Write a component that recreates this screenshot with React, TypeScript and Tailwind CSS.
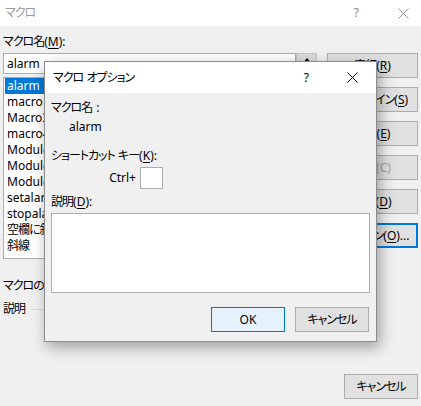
import React from "react";

const FONT = {
  fontFamily: '"Noto Sans", "Noto Sans CJK JP", sans-serif',
  fontFeatureSettings: '"palt"',
};

function U({ c }: { c: string }) {
  return <span className="underline underline-offset-[2px] decoration-[1px]">{c}</span>;
}

function J({ children }: { children: React.ReactNode }) {
  return <span className="tracking-[-1px]">{children}</span>;
}

function Btn({
  children,
  disabled,
  focused,
}: {
  children: React.ReactNode;
  disabled?: boolean;
  focused?: boolean;
}) {
  return (
    <div
      className={
        "h-[25px] flex items-center justify-center whitespace-pre bg-[#e1e1e1] leading-[16px] " +
        (focused ? "border-2 border-[#0078d7]" : "border border-[#adadad]") +
        (disabled ? " text-[#a0a0a0]" : " text-black")
      }
    >
      {children}
    </div>
  );
}

function XIcon({ color }: { color: string }) {
  return (
    <svg width="11" height="11" viewBox="0 0 11 11">
      <path d="M0.5 0.5 L10.5 10.5 M10.5 0.5 L0.5 10.5" stroke={color} strokeWidth="1" fill="none" />
    </svg>
  );
}

export default function App() {
  const items = [
    "alarm",
    "macro1",
    "Macro3",
    "macro4",
    "Module1.alarm",
    "Module1.macro1",
    "Module2.setalarm",
    "setalarm",
    "stopalarm",
    "空欄に斜線",
    "斜線",
  ];
  return (
    <div
      className="relative w-[421px] h-[406px] bg-[#f0f0f0] overflow-hidden text-[12px] text-black"
      style={FONT}
    >
      {/* outer title bar */}
      <div className="h-[26px] bg-white flex items-center pl-[5px]">
        <span className="text-[#9a9a9a] leading-[16px]">
          <J>マクロ</J>
        </span>
        <span className="ml-auto text-[#8a8a8a] leading-[16px] mr-[39px]">?</span>
        <span className="mr-[12px] flex items-center">
          <XIcon color="#9a9a9a" />
        </span>
      </div>

      {/* outer body */}
      <div className="flex px-[3px] gap-[10px]">
        <div className="w-[314px] flex flex-col">
          <div className="mt-[8px] h-[16px] leading-[16px]">
            <J>マクロ名</J>(<U c="M" />):
          </div>
          <div className="mt-[3px] h-[21px] flex">
            <div className="flex-1 bg-white border border-[#adadad] flex items-center pl-[3px] leading-[16px]">
              alarm
            </div>
            <div className="w-[21px] bg-[#dadada] border border-[#c4c4c4] flex justify-center pt-[4px]">
              <svg width="8" height="5" viewBox="0 0 8 5">
                <path d="M4 0 L8 5 L0 5 Z" fill="#000" />
              </svg>
            </div>
          </div>
          <div className="mt-[3px] h-[182px] bg-white border border-[#adadad] flex flex-col px-[1px]">
            {items.map((it, i) => (
              <div
                key={it}
                className={
                  "h-[16px] leading-[16px] pl-[2px] whitespace-nowrap " +
                  (i === 0 ? "bg-[#0078d7] text-white" : "")
                }
              >
                {/^[A-Za-z]/.test(it) ? it : <J>{it}</J>}
              </div>
            ))}
          </div>
          <div className="mt-[19px] h-[16px] leading-[16px] whitespace-nowrap">
            <J>マクロの保存先</J>(<U c="A" />):
          </div>
          <div className="mt-[7px] h-[16px] flex items-center">
            <span className="leading-[16px] whitespace-nowrap">
              <J>説明</J>
            </span>
            <div className="ml-[5px] flex-1 h-px bg-[#dcdcdc]" />
          </div>
        </div>
        <div className="w-[91px] flex flex-col gap-[9px] pt-[27px]">
          <Btn>
            <J>実行</J>(<U c="R" />)
          </Btn>
          <Btn>
            <J>ステップ</J> <J>イン</J>(<U c="S" />)
          </Btn>
          <Btn>
            <J>編集</J>(<U c="E" />)
          </Btn>
          <Btn disabled>
            <J>作成</J>(C)
          </Btn>
          <Btn>
            <J>削除</J>(<U c="D" />)
          </Btn>
          <Btn focused>
            <J>オプション</J>(<U c="O" />)...
          </Btn>
        </div>
      </div>
      <div className="flex justify-end pr-[3px] mt-[57px]">
        <div className="w-[74px]">
          <Btn>
            <J>キャンセル</J>
          </Btn>
        </div>
      </div>

      {/* modal dialog */}
      <div className="absolute left-[44px] top-[61px] w-[333px] h-[281px] border border-[#8c8c8c] bg-[#f0f0f0] shadow-[3px_5px_14px_rgba(0,0,0,0.35)] flex flex-col">
        <div className="h-[31px] bg-white flex items-center pl-[8px]">
          <span className="leading-[16px] whitespace-pre">
            <J>マクロ</J> <J>オプション</J>
          </span>
          <span className="ml-auto leading-[16px] mr-[38px]">?</span>
          <span className="mr-[18px] flex items-center">
            <XIcon color="#000" />
          </span>
        </div>
        <div className="flex flex-col px-[6px]">
          <div className="mt-[7px] h-[16px] leading-[16px] whitespace-pre">
            <J>マクロ名</J> <span className="ml-[1px]">:</span>
          </div>
          <div className="mt-[3px] h-[16px] leading-[16px] pl-[18px]">alarm</div>
          <div className="mt-[13px] h-[16px] leading-[16px] whitespace-pre">
            <J>ショートカット</J> <J>キー</J>(<U c="K" />):
          </div>
          <div className="mt-[3px] h-[22px] flex items-center">
            <span className="w-[85px] text-right leading-[16px]">Ctrl+</span>
            <div className="ml-[4px] w-[23px] h-[22px] bg-white border border-[#adadad]" />
          </div>
          <div className="mt-[5px] h-[16px] leading-[16px]">
            <J>説明</J>(<U c="D" />):
          </div>
          <div className="mt-[3px] h-[80px] bg-white border border-[#adadad]" />
          <div className="mt-[14px] flex justify-end gap-[10px] pr-[1px]">
            <div className="w-[74px] h-[25px] flex items-center justify-center bg-[#e5f1fb] border border-[#0078d7] leading-[16px]">
              OK
            </div>
            <div className="w-[74px]">
              <Btn>
                <J>キャンセル</J>
              </Btn>
            </div>
          </div>
        </div>
      </div>
    </div>
  );
}
